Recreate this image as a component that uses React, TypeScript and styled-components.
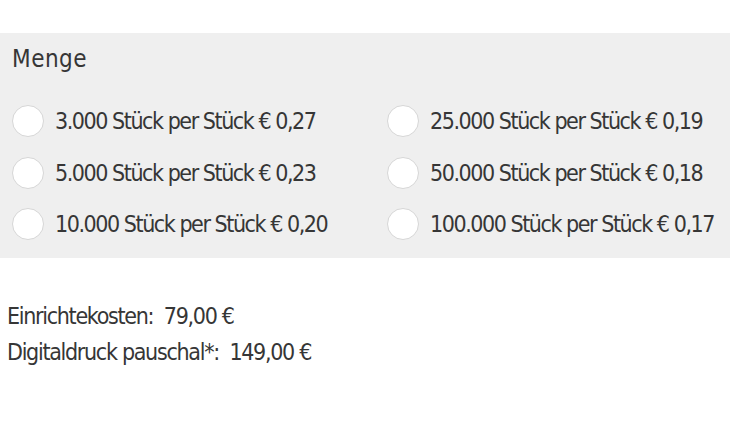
import React from "react";
import styled, { createGlobalStyle } from "styled-components";

const GlobalStyle = createGlobalStyle`
  body {
    margin: 0;
    background: #fff;
    font-family: "DejaVu Sans Condensed", "Open Sans", sans-serif;
    color: #363636;
  }
`;

const StyledPage = styled.div`
  width: 730px;
  height: 422px;
  padding-top: 33px;
  box-sizing: border-box;
`;

const StyledPanel = styled.div`
  background-color: #efefef;
  padding: 12px 0 0 12px;
  height: 225px;
  box-sizing: border-box;
`;

const StyledTitle = styled.div`
  font-size: 24px;
  line-height: 28px;
  letter-spacing: 0.5px;
  margin-bottom: 32px;
`;

const StyledGrid = styled.div`
  display: grid;
  grid-template-columns: 375px 1fr;
  row-gap: 19.5px;
`;

const StyledOption = styled.label`
  display: flex;
  align-items: center;
  gap: 11px;
  font-size: 23px;
  letter-spacing: -1.45px;
  height: 32px;
  cursor: pointer;
`;

const StyledRadio = styled.span`
  width: 30px;
  height: 30px;
  border-radius: 50%;
  background: #fff;
  border: 1px solid #d6d6d6;
  flex-shrink: 0;
`;

const StyledCosts = styled.div`
  padding: 40px 0 0 7px;
  font-size: 23px;
  letter-spacing: -1.3px;
  line-height: 36px;
`;

const options = [
  ["3.000", "0,27"],
  ["25.000", "0,19"],
  ["5.000", "0,23"],
  ["50.000", "0,18"],
  ["10.000", "0,20"],
  ["100.000", "0,17"],
];

export default function App() {
  return (
    <StyledPage>
      <GlobalStyle />
      <StyledPanel>
        <StyledTitle>Menge</StyledTitle>
        <StyledGrid>
          {options.map(([qty, price]) => (
            <StyledOption key={qty}>
              <StyledRadio />
              {qty} Stück per Stück € {price}
            </StyledOption>
          ))}
        </StyledGrid>
      </StyledPanel>
      <StyledCosts>
        <div>Einrichtekosten:&nbsp; 79,00 €</div>
        <div>Digitaldruck pauschal*:&nbsp; 149,00 €</div>
      </StyledCosts>
    </StyledPage>
  );
}
